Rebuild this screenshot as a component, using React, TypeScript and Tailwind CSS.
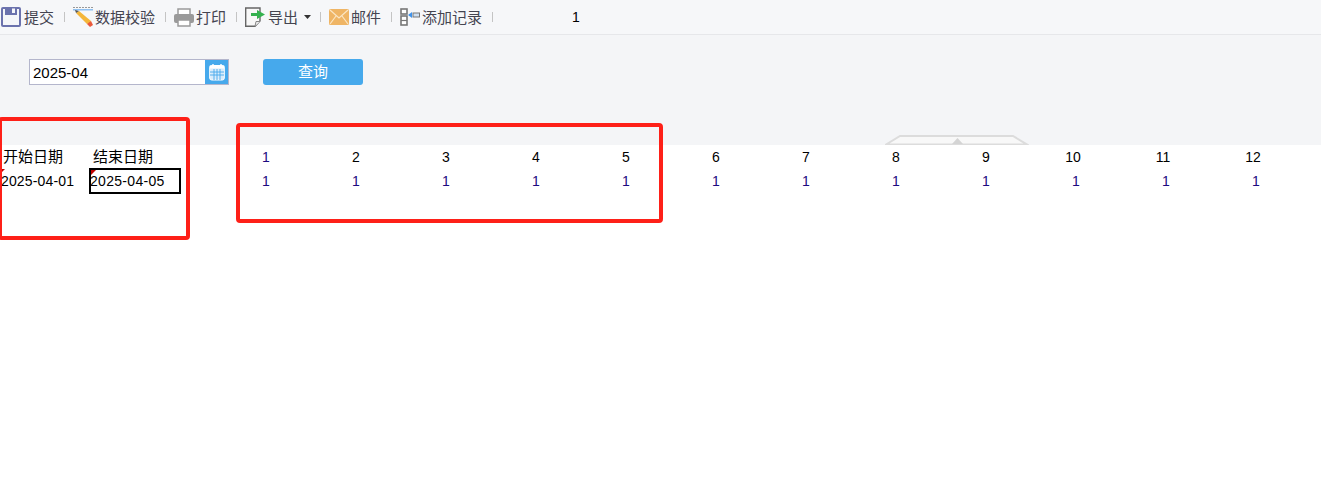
const font = "font-['Liberation_Sans','Noto_Sans_CJK_SC',sans-serif]";

function Save() {
  return (
    <svg width="20" height="20" viewBox="0 0 20 20" className="block">
      <rect width="20" height="20" rx="2" fill="#6b72ad" />
      <rect x="2" y="2" width="16" height="16" fill="#f5f6f9" />
      <rect x="4" y="0" width="12" height="8" fill="#6b72ad" />
      <rect x="11" y="1.5" width="3" height="4.5" fill="#f5f6f9" />
    </svg>
  );
}
function Pencil() {
  return (
    <svg width="20" height="20" viewBox="0 0 20 20" className="block">
      <path d="M0 0.5h20" stroke="#999" strokeWidth="1" strokeDasharray="2 1" />
      <rect x="0" y="2" width="20" height="1.5" fill="#8fc0f0" />
      <path d="M3 6L14 17L17 16L18 14L6 4Z" fill="#f4b63a" />
      <path d="M3 6L6 4L2 3Z" fill="#555" />
      <path d="M14 17L18 14L20 18L17 20Z" fill="#ea5a3c" />
    </svg>
  );
}
function Printer() {
  return (
    <svg width="20" height="20" viewBox="0 0 20 20" className="block">
      <rect x="4" y="2" width="12" height="6" fill="#fff" stroke="#9a9a9a" strokeWidth="1.5" />
      <rect x="0" y="7" width="20" height="9" rx="2" fill="#9a9a9a" />
      <rect x="4" y="13" width="12" height="6" fill="#fff" stroke="#9a9a9a" strokeWidth="1.5" />
    </svg>
  );
}
function ExportIcon() {
  return (
    <svg width="20" height="20" viewBox="0 0 20 20" className="block">
      <path d="M0.7 1H15V14L10 19.3H0.7Z" fill="#f8f8f8" stroke="#666" strokeWidth="1.4" />
      <path d="M10 19.3L11 14.5H15" fill="#eee" stroke="#888" />
      <path d="M6 6H12V3L20 7.5L12 12V9H6Z" fill="#35b14e" />
    </svg>
  );
}
function Mail() {
  return (
    <svg width="20" height="16" viewBox="0 0 20 16" className="block">
      <rect width="20" height="16" rx="1.5" fill="#efb565" />
      <path d="M1 1L10 9L19 1M1 15L7 7M19 15L13 7" fill="none" stroke="#fbe6c4" strokeWidth="1.2" />
    </svg>
  );
}
function AddRecord() {
  return (
    <svg width="20" height="18" viewBox="0 0 20 18" className="block">
      <rect x="1" y="1" width="6" height="5" fill="#fff" stroke="#777" strokeWidth="1.6" />
      <rect x="1" y="8" width="6" height="9" fill="#fff" stroke="#777" strokeWidth="1.6" />
      <path d="M1 12.5H7" stroke="#777" strokeWidth="1.2" />
      <rect x="13" y="5" width="6.5" height="4" fill="#cfe0f2" stroke="#777" />
      <path d="M8 7L12 4V10Z" fill="#3f92ea" />
    </svg>
  );
}
function Calendar() {
  return (
    <svg width="16" height="18" viewBox="0 0 16 18">
      <rect x="0.7" y="2.5" width="14.6" height="14.5" rx="2" fill="#d9ecfb" stroke="#fff" />
      <rect x="0.7" y="2.5" width="14.6" height="3" fill="#fff" />
      <path d="M4 1v3M12 1v3" stroke="#fff" strokeWidth="1.4" />
      <path d="M1 9h14M1 12h14M5 6v11M8 6v11M11 6v11" stroke="#46a9ec" strokeWidth="0.9" />
    </svg>
  );
}

function Sep() {
  return <span className="ml-[10px] mr-[8px] h-[10px] w-px shrink-0 bg-[#c4c4c4]" />;
}

function Tool({ icon, label, gap = "gap-[2px]" }: { icon: React.ReactNode; label: string; gap?: string }) {
  return (
    <div className={`flex items-center ${gap} text-[15px] leading-none text-[#444450]`}>
      <span className="flex h-[20px] w-[20px] shrink-0 items-center justify-center">{icon}</span>
      <span className="whitespace-nowrap">{label}</span>
    </div>
  );
}

const months = Array.from({ length: 12 }, (_, i) => i + 1);

export default function App() {
  return (
    <div className={`relative h-[477px] w-[1321px] overflow-hidden bg-white ${font}`}>
      <div className="flex h-[35px] items-center border-b border-[#e6e7ea] bg-[#f6f7f9] pl-px">
        <Tool icon={<Save />} label="提交" gap="gap-[3px]" />
        <Sep />
        <Tool icon={<Pencil />} label="数据校验" />
        <Sep />
        <Tool icon={<Printer />} label="打印" />
        <Sep />
        <Tool icon={<ExportIcon />} label="导出" gap="gap-[3px]" />
        <svg width="7" height="4" viewBox="0 0 7 4" className="ml-[6px] -mr-[1px]"><path d="M0 0H7L3.5 4Z" fill="#333" /></svg>
        <Sep />
        <Tool icon={<Mail />} label="邮件" />
        <Sep />
        <Tool icon={<AddRecord />} label="添加记录" />
        <Sep />
        <span className="ml-[71px] pt-[1px] text-[14px] text-black">1</span>
      </div>

      <div className="relative h-[110px] bg-[#f4f5f7] pl-[29px] pt-[24px]">
        <div className="flex items-start">
          <div className="flex h-[26px] w-[200px] border border-[#b4b6cc] bg-white">
            <span className="flex-1 pl-[3px] text-[15px] leading-[25px] text-black">2025-04</span>
            <span className="flex w-[23px] items-center justify-center bg-[#46a9ec]"><Calendar /></span>
          </div>
          <button className="ml-[34px] h-[26px] w-[100px] rounded-[3px] bg-[#46a9ec] text-[15px] text-white">查询</button>
        </div>
        <svg width="144" height="10" viewBox="0 0 144 10" className="absolute bottom-0 left-[885px]">
          <path d="M1 9.5L15 1H128L142 9.5Z" fill="#f8f8f8" stroke="#dcdcdc" strokeWidth="2" />
          <path d="M67 9L72.5 3L78 9Z" fill="#d4d4d4" />
        </svg>
      </div>

      <div className="grid grid-cols-[90px_90px_41px_repeat(12,90px)] text-[14px] leading-[24px] text-black">
        <div className="h-[24px] whitespace-nowrap pl-[3px] text-[15px]">开始日期</div>
        <div className="h-[24px] whitespace-nowrap pl-[3px] text-[15px]">结束日期</div>
        <div />
        {months.map((m) => (
          <div key={m} className={`h-[24px] text-center ${m === 1 ? "text-[#1c0a80]" : ""} ${m >= 10 ? "pr-[6px]" : ""}`}>{m}</div>
        ))}
        <div className="relative h-[24px] whitespace-nowrap pl-px tracking-[0.15px]">
          <span className="absolute left-[1px] top-0 border-r-[4px] border-t-[4px] border-r-transparent border-t-[#c00000]" />
          2025-04-01
        </div>
        <div className="relative h-[24px] whitespace-nowrap tracking-[0.3px]">
          <span className="absolute -bottom-px -left-px -right-px -top-px border-2 border-black" />
          <span className="absolute left-[1px] top-[1px] border-r-[5px] border-t-[5px] border-r-transparent border-t-[#c00000]" />
          2025-04-05
        </div>
        <div />
        {months.map((m) => (
          <div key={m} className="h-[24px] text-center text-[#1c0a80]">1</div>
        ))}
      </div>

      <div className="absolute left-[-2px] top-[117px] h-[123px] w-[192px] rounded-[4px] border-4 border-[#fe2018]" />
      <div className="absolute left-[236px] top-[123px] h-[100px] w-[427px] rounded-[4px] border-4 border-[#fe2018]" />
    </div>
  );
}
